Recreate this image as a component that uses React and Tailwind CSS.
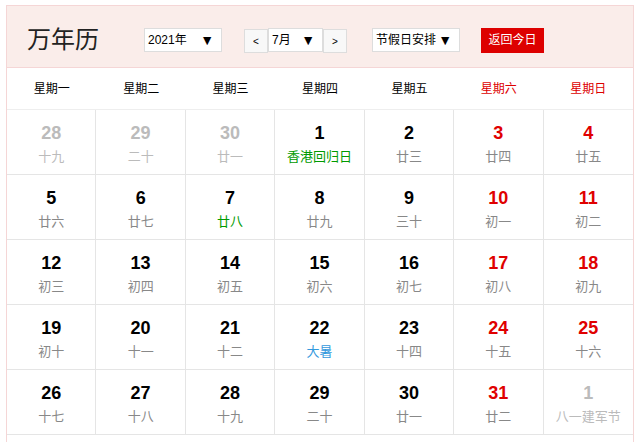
import React from 'react';

const weekdays = [
  { label: '星期一', weekend: false },
  { label: '星期二', weekend: false },
  { label: '星期三', weekend: false },
  { label: '星期四', weekend: false },
  { label: '星期五', weekend: false },
  { label: '星期六', weekend: true },
  { label: '星期日', weekend: true },
];

// kind: 'other' = 非本月, 'rest' = 周末, 'work' = 工作日
// note: 'holiday' = 节日 (green), 'term' = 节气 (blue)
const days = [
  { d: 28, l: '十九', kind: 'other' },
  { d: 29, l: '二十', kind: 'other' },
  { d: 30, l: '廿一', kind: 'other' },
  { d: 1, l: '香港回归日', kind: 'work', note: 'holiday' },
  { d: 2, l: '廿三', kind: 'work' },
  { d: 3, l: '廿四', kind: 'rest' },
  { d: 4, l: '廿五', kind: 'rest' },
  { d: 5, l: '廿六', kind: 'work' },
  { d: 6, l: '廿七', kind: 'work' },
  { d: 7, l: '廿八', kind: 'work', note: 'holiday' },
  { d: 8, l: '廿九', kind: 'work' },
  { d: 9, l: '三十', kind: 'work' },
  { d: 10, l: '初一', kind: 'rest' },
  { d: 11, l: '初二', kind: 'rest' },
  { d: 12, l: '初三', kind: 'work' },
  { d: 13, l: '初四', kind: 'work' },
  { d: 14, l: '初五', kind: 'work' },
  { d: 15, l: '初六', kind: 'work' },
  { d: 16, l: '初七', kind: 'work' },
  { d: 17, l: '初八', kind: 'rest' },
  { d: 18, l: '初九', kind: 'rest' },
  { d: 19, l: '初十', kind: 'work' },
  { d: 20, l: '十一', kind: 'work' },
  { d: 21, l: '十二', kind: 'work' },
  { d: 22, l: '大暑', kind: 'work', note: 'term' },
  { d: 23, l: '十四', kind: 'work' },
  { d: 24, l: '十五', kind: 'rest' },
  { d: 25, l: '十六', kind: 'rest' },
  { d: 26, l: '十七', kind: 'work' },
  { d: 27, l: '十八', kind: 'work' },
  { d: 28, l: '十九', kind: 'work' },
  { d: 29, l: '二十', kind: 'work' },
  { d: 30, l: '廿一', kind: 'work' },
  { d: 31, l: '廿二', kind: 'rest' },
  { d: 1, l: '八一建军节', kind: 'other' },
];

const numberColor = (kind) => {
  if (kind === 'other') return 'text-[#bbbbbb]';
  if (kind === 'rest') return 'text-[#e00000]';
  return 'text-black';
};

const lunarColor = (day) => {
  if (day.kind === 'other') return 'text-[#bbbbbb]';
  if (day.note === 'holiday') return 'text-[#009a00]';
  if (day.note === 'term') return 'text-[#3399dd]';
  return 'text-[#888888]';
};

const Select = ({ label, width }) => (
  <div
    className={`${width} h-[24px] bg-white border border-[#dddddd] flex items-center justify-between pl-[3px] pr-[7px] text-[12px] text-black`}
  >
    <span>{label}</span>
    <span className="text-[14px] leading-[14px]">▼</span>
  </div>
);

const ArrowButton = ({ children }) => (
  <div className="w-[24px] h-[24px] mt-[1px] bg-[#f8f8f8] border border-[#dddddd] flex items-center justify-center text-[10px] text-black">
    {children}
  </div>
);

const App = () => {
  return (
    <div
      className="ml-[6px] mt-[5px] w-[628px] border border-[#f5d6d6] bg-white pb-[10px]"
      style={{ fontFamily: '"Liberation Sans", "Noto Sans CJK SC", sans-serif' }}
    >
      <div className="h-[62px] bg-[#faedea] border-b border-[#f5d6d6] flex items-start pt-[22px] pl-[20px]">
        <h1 className="text-[24px] leading-[32px] -mt-[4px] font-normal text-[#222222]">万年历</h1>
        <div className="ml-[45px]">
          <Select label="2021年" width="w-[78px]" />
        </div>
        <div className="ml-[22px] flex">
          <ArrowButton>&lt;</ArrowButton>
          <Select label="7月" width="w-[55px]" />
          <ArrowButton>&gt;</ArrowButton>
        </div>
        <div className="ml-[25px]">
          <Select label="节假日安排" width="w-[88px]" />
        </div>
        <button className="ml-[21px] w-[63px] h-[25px] bg-[#dd0000] text-white text-[12px] leading-[25px]">
          返回今日
        </button>
      </div>

      <div className="grid grid-cols-7 h-[42px] border-b border-[#eeeeee]">
        {weekdays.map((w) => (
          <div
            key={w.label}
            className={`flex items-center justify-center text-[12px] ${w.weekend ? 'text-[#dd0000]' : 'text-black'}`}
          >
            {w.label}
          </div>
        ))}
      </div>

      <div className="grid grid-cols-7">
        {days.map((day, i) => (
          <div
            key={i}
            className={`h-[65px] border-b border-[#e5e5e5] ${i % 7 === 6 ? '' : 'border-r'} flex flex-col items-center pt-[13px]`}
          >
            <div className={`text-[18px] leading-[20px] font-bold ${numberColor(day.kind)}`}>{day.d}</div>
            <div className={`mt-[6px] text-[13px] leading-[16px] whitespace-nowrap ${lunarColor(day)}`}>{day.l}</div>
          </div>
        ))}
      </div>
    </div>
  );
};

export default App;
